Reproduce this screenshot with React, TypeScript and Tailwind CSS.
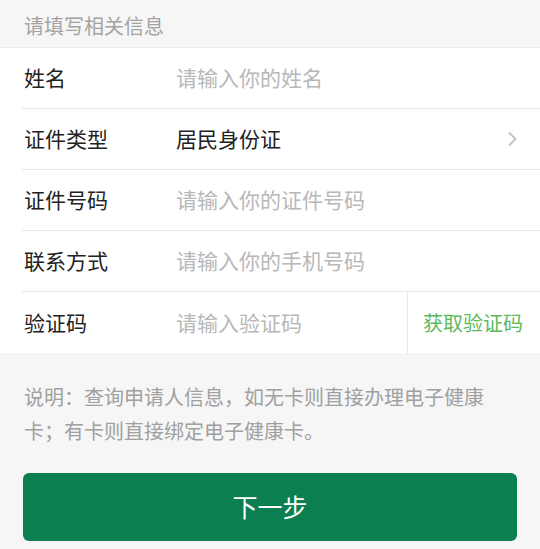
import React from 'react';

const rows = [
  { label: '姓名', value: '请输入你的姓名', placeholder: true },
  { label: '证件类型', value: '居民身份证', placeholder: false, arrow: true },
  { label: '证件号码', value: '请输入你的证件号码', placeholder: true },
  { label: '联系方式', value: '请输入你的手机号码', placeholder: true },
];

const App = () => {
  return (
    <div
      className="w-[540px] h-[549px] bg-[#f6f6f6] overflow-hidden"
      style={{ fontFamily: '"Noto Sans CJK SC", "Noto Sans", sans-serif' }}
    >
      <div className="h-[48px] flex items-center pt-[4px] px-[24px] text-[20px] text-[#a3a3a3] border-b border-[#ececec]">
        请填写相关信息
      </div>

      <div className="bg-white">
        {rows.map((row) => (
          <div key={row.label} className="pl-[22px]">
            <div className="h-[61px] flex items-center border-b border-[#e8e8e8]">
              <div className="w-[154px] pl-[2px] text-[21px] text-[#222]">{row.label}</div>
              <div
                className={
                  row.placeholder
                    ? 'flex-1 text-[21px] text-[#b8b8b8]'
                    : 'flex-1 text-[21px] text-[#222]'
                }
              >
                {row.value}
              </div>
              {row.arrow && (
                <svg width="16" height="20" viewBox="0 0 16 20" className="mr-[20px]">
                  <path d="M5 3.5 L11.5 10 L5 16.5" fill="none" stroke="#c4c4c4" strokeWidth="2" />
                </svg>
              )}
            </div>
          </div>
        ))}
        <div className="pl-[22px] h-[63px] flex items-center border-b border-[#ececec]">
          <div className="w-[154px] pl-[2px] text-[21px] text-[#222]">验证码</div>
          <div className="flex-1 text-[21px] text-[#b8b8b8]">请输入验证码</div>
          <div className="h-full w-[133px] border-l border-[#e8e8e8] flex items-center pl-[15px] text-[20px] text-[#5cb85c]">
            获取验证码
          </div>
        </div>
      </div>

      <div className="pl-[24px] pr-[40px] pt-[25px] text-[20px] leading-[34px] text-[#a0a0a0]">
        说明：查询申请人信息，如无卡则直接办理电子健康卡；有卡则直接绑定电子健康卡。
      </div>

      <div className="px-[23px] mt-[25px]">
        <button className="w-full h-[68px] rounded-[6px] bg-[#0b7f4f] text-white text-[25px] flex items-center justify-center">
          下一步
        </button>
      </div>
    </div>
  );
};

export default App;
